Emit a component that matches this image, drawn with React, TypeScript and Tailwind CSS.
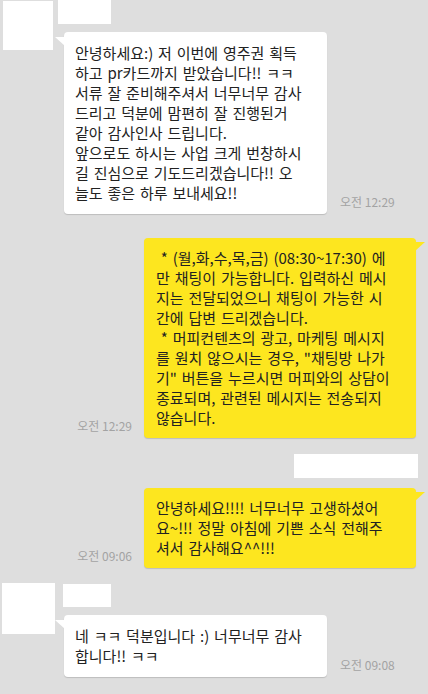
const font = { fontFamily: '"Noto Sans CJK KR", "Noto Sans", sans-serif' };

const firstMsg = [
  '안녕하세요:) 저 이번에 영주권 획득',
  '하고 pr카드까지 받았습니다!! ㅋㅋ',
  '서류 잘 준비해주셔서 너무너무 감사',
  '드리고 덕분에 맘편히 잘 진행된거',
  '같아 감사인사 드립니다.',
  '앞으로도 하시는 사업 크게 번창하시',
  '길 진심으로 기도드리겠습니다!! 오',
  '늘도 좋은 하루 보내세요!!',
];

const autoReply = [
  ' * (월,화,수,목,금) (08:30~17:30) 에',
  '만 채팅이 가능합니다. 입력하신 메시',
  '지는 전달되었으니 채팅이 가능한 시',
  '간에 답변 드리겠습니다.',
  ' * 머피컨텐츠의 광고, 마케팅 메시지',
  '를 원치 않으시는 경우, "채팅방 나가',
  '기" 버튼을 누르시면 머피와의 상담이',
  '종료되며, 관련된 메시지는 전송되지',
  '않습니다.',
];

const myMsg = [
  '안녕하세요!!!! 너무너무 고생하셨어',
  '요~!!! 정말 아침에 기쁜 소식 전해주',
  '셔서 감사해요^^!!!',
];

const lastMsg = ['네 ㅋㅋ 덕분입니다 :) 너무너무 감사', '합니다!! ㅋㅋ'];

function Lines({ lines }: { lines: string[] }) {
  return (
    <>
      {lines.map((l, i) => (
        <div key={i} className="whitespace-pre leading-[20px] [word-spacing:1.5px]">
          {l}
        </div>
      ))}
    </>
  );
}

function Time({ t }: { t: string }) {
  return <span className="text-[12px] leading-[16px] text-[#a3a3a3] mb-[4px] whitespace-nowrap">{t}</span>;
}

function Received({ lines, time }: { lines: string[]; time: string }) {
  return (
    <div className="flex items-end gap-[13px]">
      <div className="relative w-[263px] rounded-[4px] bg-white pl-[11px] pr-[10px] py-[11px] text-[15px] text-[#222] shadow-[0_1px_1px_rgba(0,0,0,0.15)]">
        <svg className="absolute left-[-9px] top-[5px]" width="10" height="9" viewBox="0 0 10 9">
          <polygon points="0,0 10,0 10,9" fill="#ffffff" />
        </svg>
        <Lines lines={lines} />
      </div>
      <Time t={time} />
    </div>
  );
}

function Sent({ lines, time }: { lines: string[]; time: string }) {
  return (
    <div className="flex items-end justify-end gap-[12px] pr-[12px]">
      <Time t={time} />
      <div className="relative w-[272px] rounded-[4px] bg-[#fde61f] pl-[12px] pr-[10px] py-[10px] text-[15px] text-[#222] shadow-[0_1px_1px_rgba(0,0,0,0.15)]">
        <svg className="absolute right-[-9px] top-[4px]" width="10" height="9" viewBox="0 0 10 9">
          <polygon points="0,0 10,0 0,9" fill="#fde61f" />
        </svg>
        <Lines lines={lines} />
      </div>
    </div>
  );
}

export default function App() {
  return (
    <div className="w-[428px] h-[694px] overflow-hidden bg-[#dedede]" style={font}>
      {/* incoming message 1 */}
      <div className="flex">
        <div className="ml-[3px] mt-[1px] h-[49px] w-[50px] bg-white" />
        <div className="ml-[5px] flex flex-col">
          <div className="h-[24px] w-[53px] bg-white" />
          <div className="ml-[6px] mt-[8px]">
            <Received lines={firstMsg} time="오전 12:29" />
          </div>
        </div>
      </div>

      {/* auto reply */}
      <div className="mt-[24px]">
        <Sent lines={autoReply} time="오전 12:29" />
      </div>

      <div className="mt-[16px] flex justify-end pr-[10px]">
        <div className="h-[24px] w-[124px] bg-white" />
      </div>

      <div className="mt-[10px]">
        <Sent lines={myMsg} time="오전 09:06" />
      </div>

      {/* incoming message 2 */}
      <div className="mt-[15px] flex">
        <div className="ml-[2px] h-[51px] w-[53px] bg-white" />
        <div className="ml-[8px] flex flex-col">
          <div className="mt-[1px] h-[23px] w-[48px] bg-white" />
          <div className="ml-[1px] mt-[8px]">
            <Received lines={lastMsg} time="오전 09:08" />
          </div>
        </div>
      </div>
    </div>
  );
}
